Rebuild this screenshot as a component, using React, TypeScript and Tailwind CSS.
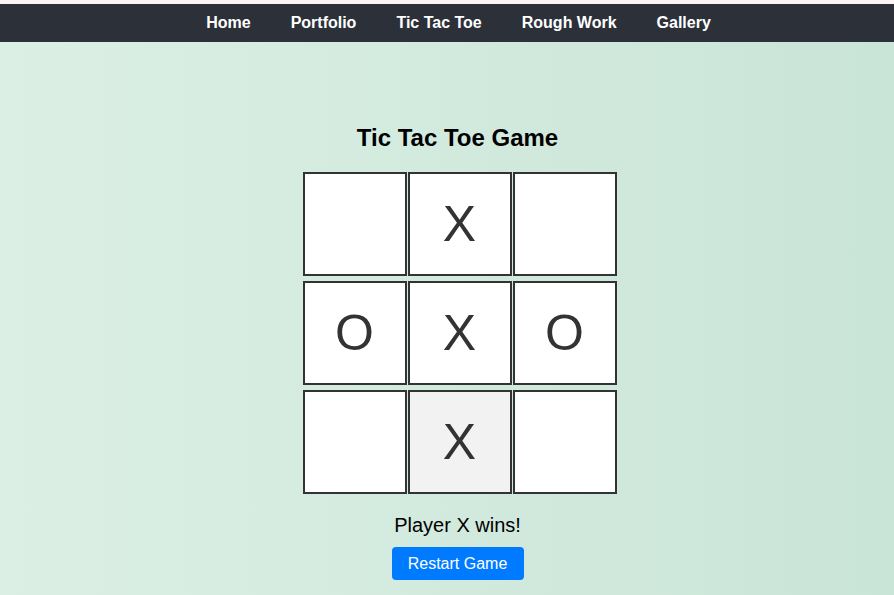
import React, { useState } from 'react';

const navLinks = ['Home', 'Portfolio', 'Tic Tac Toe', 'Rough Work', 'Gallery'];

const initialBoard = ['', 'X', '', 'O', 'X', 'O', '', 'X', ''];

const App = () => {
  const [board, setBoard] = useState<string[]>(initialBoard);
  const [status, setStatus] = useState('Player X wins!');

  // Reset the board
  const restart = () => {
    setBoard(Array(9).fill(''));
    setStatus('');
  };

  return (
    <div className="min-h-[595px] font-['Liberation_Sans',Arial,sans-serif] bg-[linear-gradient(to_right,#dcefe5,#c9e5d7)]">
      <div className="h-[4px] bg-[#fcf4f4]" />
      <nav className="h-[38px] bg-[#2c3039] flex items-center justify-center gap-[40px] pl-[23px]">
        {navLinks.map((link) => (
          <a key={link} className="text-white font-bold text-[16px]">
            {link}
          </a>
        ))}
      </nav>

      <div className="flex flex-col items-center pt-[82px] pl-[21px]">
        <h2 className="text-[24px] font-bold text-black leading-[28px]">Tic Tac Toe Game</h2>

        <div className="mt-[20px] ml-[4px] grid grid-cols-[104px_104px_104px] gap-x-[1px] gap-y-[5px]">
          {board.map((cell, i) => (
            <button
              key={i}
              onClick={() => {
                if (cell) return;
                const next = [...board];
                next[i] = 'X';
                setBoard(next);
              }}
              className={`w-[104px] h-[104px] border-2 border-[#333] flex items-center justify-center text-[50px] text-[#333] ${
                i === 7 ? 'bg-[#f2f2f2]' : 'bg-white'
              }`}
            >
              {cell}
            </button>
          ))}
        </div>

        <p className="mt-[18px] text-[20px] text-black leading-[26px] h-[26px]">{status}</p>

        <button
          onClick={restart}
          className="mt-[9px] w-[132px] h-[33px] bg-[#007bff] text-white text-[16px] rounded-[4px]"
        >
          Restart Game
        </button>
      </div>
    </div>
  );
};

export default App;
